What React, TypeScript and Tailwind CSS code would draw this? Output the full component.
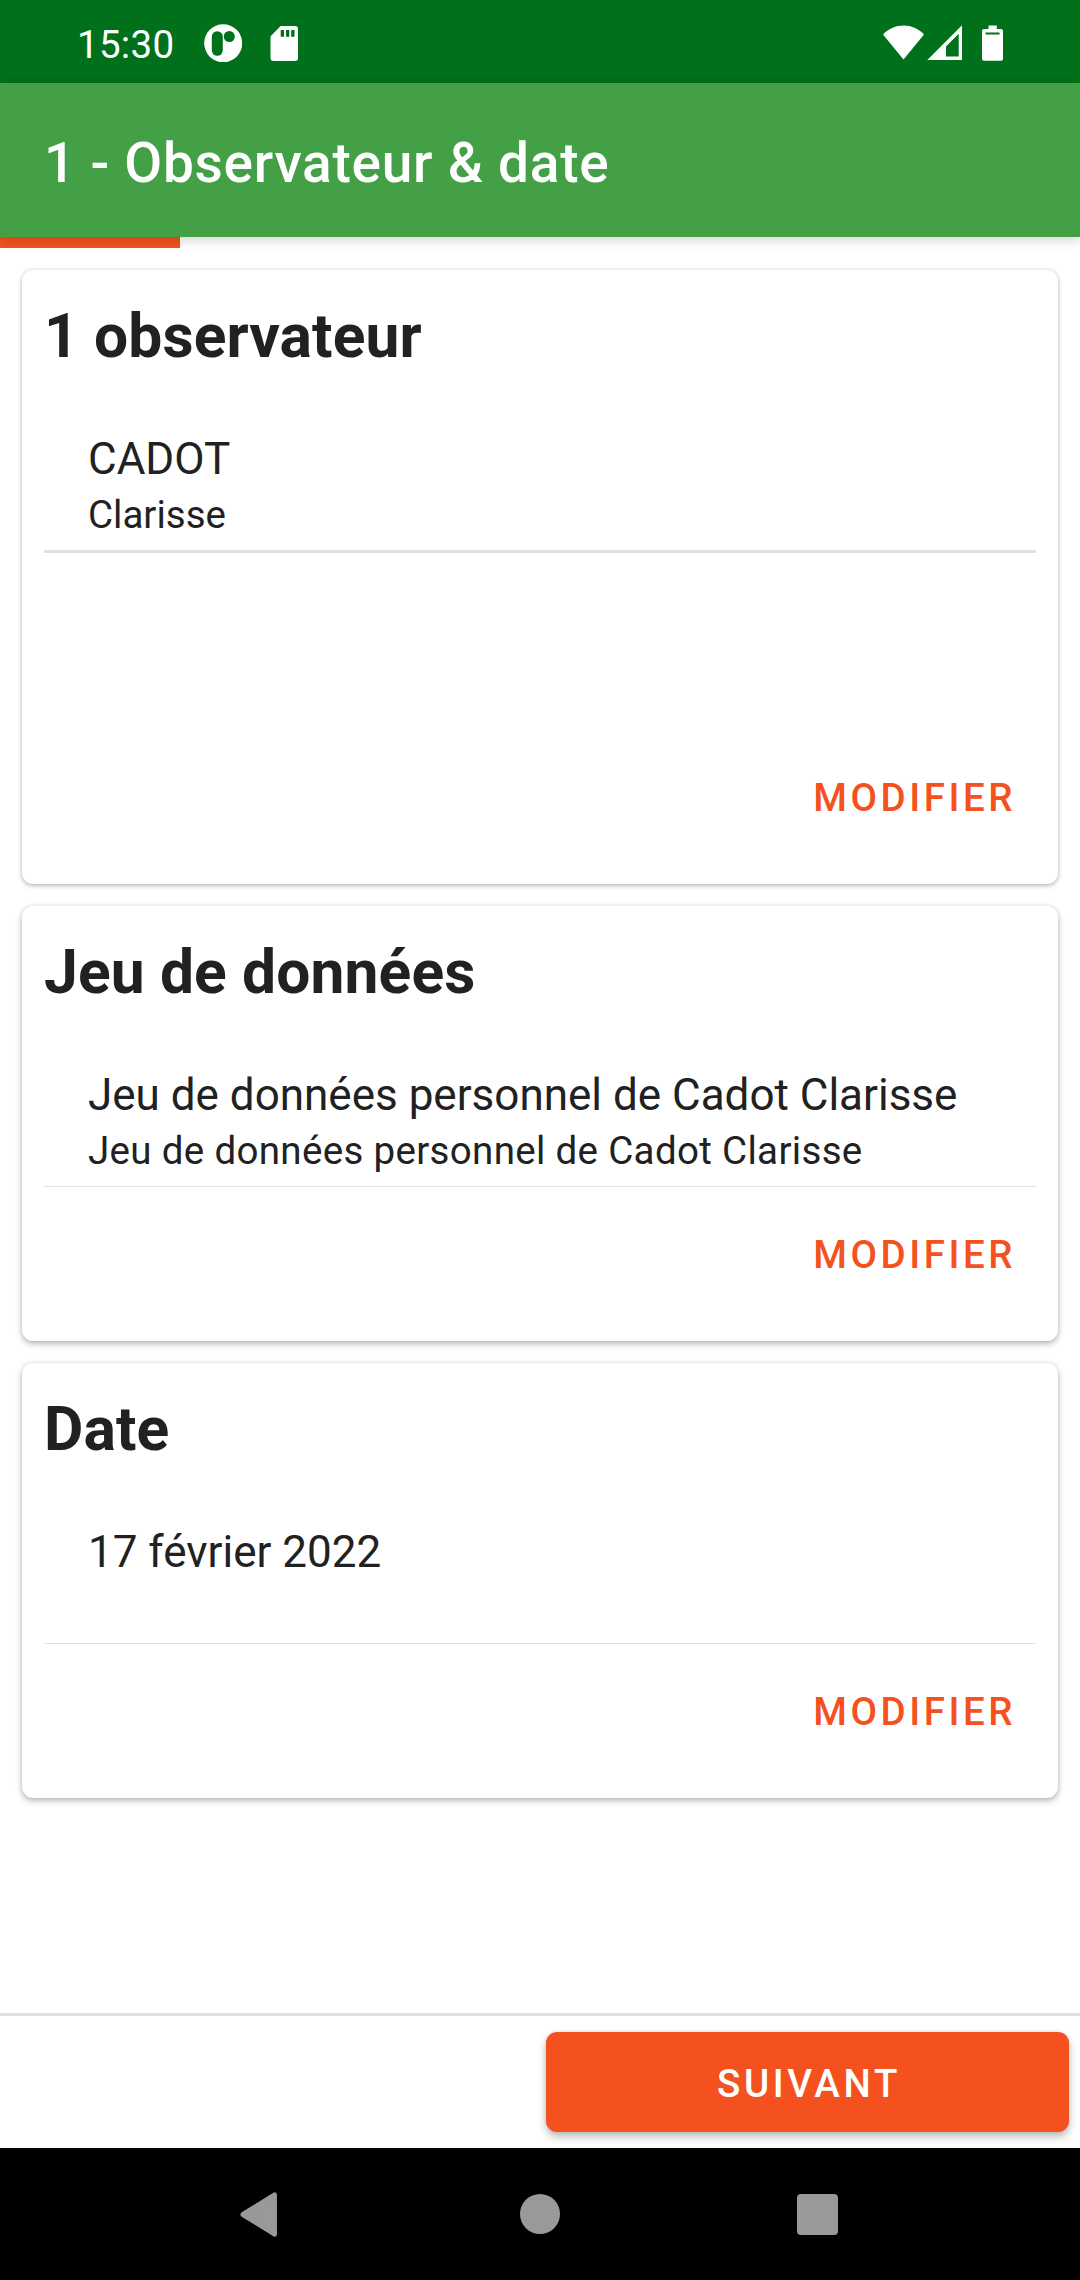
import React from "react";

function StatusBar() {
  return (
    <div className="flex h-[83px] shrink-0 items-start justify-between bg-[#00701a] pl-[77px] pr-[77px] text-white">
      <div className="flex items-start">
        <span className="w-[127px] text-[38.5px] leading-[90px] tracking-[0.3px]">15:30</span>
        <svg className="mt-6 h-[38px] w-[38px]" viewBox="0 0 38 38">
          <circle cx="19.2" cy="19.3" r="19" fill="#fff" />
          <rect x="7.8" y="7.2" width="11" height="24.6" rx="5.5" fill="#00701a" />
          <circle cx="25.3" cy="12.5" r="5.5" fill="#00701a" />
        </svg>
        <svg className="mt-[26px] ml-[28px] h-[35px] w-[28px]" viewBox="0 0 28 35" fill="#fff">
          <path d="M10.500 0H25a3 3 0 0 1 3 3v29a3 3 0 0 1-3 3H3.500a3 3 0 0 1-3-3V10.500Z" />
          <path d="M10.700 4h3.300v6.700h-3.300zM16 4h3.300v6.700H16zM21.200 4h3.300v6.700h-3.300z" fill="#00701a" />
        </svg>
      </div>
      <div className="flex items-start pt-[25px]">
        <svg className="h-[36px] w-[41px]" viewBox="0 0 41 36">
          <path d="M0 9.400C5.800 3.600 13 .5 20.500.5S35.200 3.600 41 9.400L20.500 34.600Z" fill="#fff" />
        </svg>
        <svg className="ml-[3px] h-[36px] w-[35px]" viewBox="0 0 35 36">
          <path d="M35 .3V35H.3ZM31.700 8.800 19 21.500V31.500H31.700Z" fill="#fff" fillRule="evenodd" />
        </svg>
        <svg className="ml-5 h-[36px] w-[21px]" viewBox="0 0 21 36">
          <path
            d="M6.500.5h8.300v3.600H19a2 2 0 0 1 2 2v27.600a2 2 0 0 1-2 2H2a2 2 0 0 1-2-2V6.100a2 2 0 0 1 2-2h4.500ZM3.500 7.500v2h14v-2Z"
            fill="#fff"
            fillRule="evenodd"
          />
        </svg>
      </div>
    </div>
  );
}

type CardProps = {
  title: string;
  primary: string;
  secondary?: string;
  tall?: boolean;
};

function SummaryCard({ title, primary, secondary, tall }: CardProps) {
  return (
    <section
      className={
        "flex flex-col rounded-[11px] bg-white px-[22px] py-[22px] " +
        (tall
          ? "h-[614px] shadow-[0_2px_5px_rgba(0,0,0,0.22),0_0_4px_rgba(0,0,0,0.12)]"
          : "h-[435px] shadow-[0_3px_6px_rgba(0,0,0,0.26),0_0_4px_rgba(0,0,0,0.1)]")
      }
    >
      <h2 className="pt-px text-[60.5px] leading-[88px] font-bold tracking-[0.13px]">{title}</h2>
      <div className="mt-[52px] h-[117px] pl-11">
        <p className="text-[44px] leading-[52px]">{primary}</p>
        <p
          className={
            tall
              ? "text-[38.5px] leading-[60px]"
              : "text-[38.5px] leading-[60px] tracking-[0.33px]"
          }
        >
          {secondary}
        </p>
      </div>
      <div className={tall ? "h-[3px] shrink-0 bg-[#e0e0e0]" : "h-px shrink-0 bg-[#e0e0e0]"} />
      <button className="mt-auto self-end pr-5 text-[38.5px] leading-[128px] font-medium tracking-[3.55px] text-[#f4511e]">
        MODIFIER
      </button>
    </section>
  );
}

function NavigationBar() {
  return (
    <div className="flex h-[132px] shrink-0 items-center bg-black pl-[239px]">
      <svg className="h-[46px] w-10" viewBox="0 0 40 46">
        <path d="M3 23.500 36 3.800V43.200Z" fill="#999" stroke="#999" strokeWidth="5" strokeLinejoin="round" transform="translate(1 0) scale(.96 1)" />
      </svg>
      <div className="ml-[241px] h-10 w-10 rounded-full bg-[#999]" />
      <div className="ml-[237px] h-[41px] w-[41px] rounded-[4px] bg-[#999]" />
    </div>
  );
}

export default function App() {
  return (
    <div className="flex h-[2280px] w-[1080px] flex-col overflow-hidden bg-white font-['Roboto',sans-serif] text-[#212121]">
      <StatusBar />
      <header className="z-10 flex h-[154px] shrink-0 items-center bg-[#43a047] pt-[6px] pl-11 shadow-[0_3px_11px_rgba(0,0,0,0.18)]">
        <h1 className="text-[55px] font-medium tracking-[0.74px] text-white">1 - Observateur &amp; date</h1>
      </header>
      <div className="h-[11px] w-[180px] shrink-0 bg-[#f4511e]" />
      <main className="flex grow flex-col gap-[22px] px-[22px] pt-[22px]">
        <SummaryCard title="1 observateur" primary="CADOT" secondary="Clarisse" tall />
        <SummaryCard
          title="Jeu de données"
          primary="Jeu de données personnel de Cadot Clarisse"
          secondary="Jeu de données personnel de Cadot Clarisse"
        />
        <SummaryCard title="Date" primary="17 février 2022" />
      </main>
      <footer className="flex h-[135px] shrink-0 items-center justify-end border-t-[3px] border-[#e0e0e0] pr-[11px]">
        <button className="h-[100px] w-[523px] rounded-[11px] bg-[#f4511e] pt-[3px] pl-[3px] text-[38.5px] font-medium tracking-[3.65px] text-white shadow-[0_5px_8px_rgba(0,0,0,0.25),0_0_4px_rgba(0,0,0,0.1)]">
          SUIVANT
        </button>
      </footer>
      <NavigationBar />
    </div>
  );
}
